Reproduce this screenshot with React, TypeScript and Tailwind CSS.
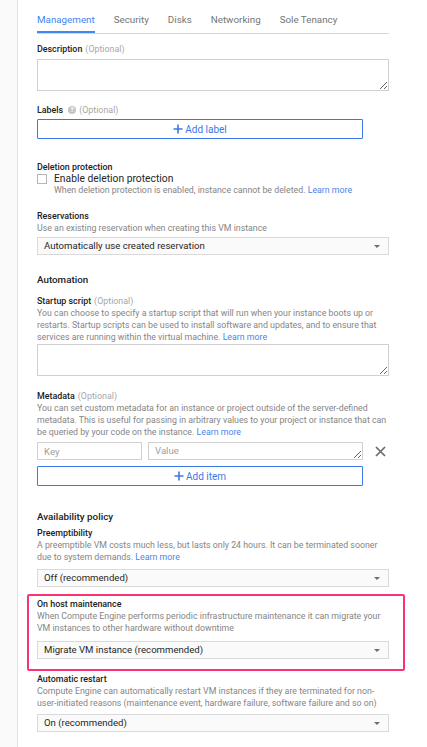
import { type ReactNode } from "react";

const tabs = ["Management", "Security", "Disks", "Networking", "Sole Tenancy"];

function Label({ children, optional, help, className = "" }: { children: ReactNode; optional?: boolean; help?: boolean; className?: string }) {
  return (
    <div className={`flex items-center text-[8.9px] leading-[12px] font-medium text-[#212121] ${className}`}>
      <span>{children}</span>
      {help && (
        <span className="ml-[5px] w-[8px] h-[8px] rounded-full bg-[#c4c4c4] text-white text-[6.5px] leading-[8px] font-bold flex items-center justify-center">
          ?
        </span>
      )}
      {optional && <span className="ml-[3px] font-normal text-[#a8a8a8]">(Optional)</span>}
    </div>
  );
}

function Help({ children, className = "" }: { children: ReactNode; className?: string }) {
  return <p className={`text-[8.8px] leading-[12px] text-[#858585] ${className}`}>{children}</p>;
}

function LearnMore() {
  return <span className="text-[#4a85ec]">Learn more</span>;
}

function Select({ value, className = "" }: { value: string; className?: string }) {
  return (
    <div className={`h-[18px] w-[352px] border border-[#dadada] bg-[#fafafa] flex items-center justify-between pl-[6px] pr-[8px] text-[9.6px] text-[#262626] ${className}`}>
      <span>{value}</span>
      <span className="w-0 h-0 border-l-[3px] border-r-[3px] border-t-[3px] border-l-transparent border-r-transparent border-t-[#6e6e6e]" />
    </div>
  );
}

function Plus() {
  return (
    <svg width="10" height="10" viewBox="0 0 10 10" className="mr-[2px]">
      <path d="M5 0.5v9M0.5 5h9" stroke="#3b78e7" strokeWidth="1.6" />
    </svg>
  );
}

function AddButton({ label, className = "" }: { label: string; className?: string }) {
  return (
    <button className={`h-[20px] w-[326px] border border-[#3b78e7] rounded-[1px] flex items-center justify-center text-[10px] text-[#3b78e7] ${className}`}>
      <Plus />
      {label}
    </button>
  );
}

function Area({ className = "" }: { className?: string }) {
  return <textarea className={`block w-[352px] h-[32px] border border-[#d0d0d0] resize-y outline-none ${className}`} />;
}

export default function App() {
  return (
    <div className="flex min-h-screen bg-white" style={{ fontFamily: "Roboto, 'Liberation Sans', sans-serif" }}>
      <div className="w-[18px] shrink-0 bg-[#fafafa] border-r border-[#e3e3e3]" />
      <div className="pl-[19px] flex flex-col">
        <div className="w-[352px] flex border-b border-[#d6d6d6]">
          {tabs.map((tab, i) => (
            <div
              key={tab}
              className={`h-[33px] pt-[13px] text-[9.8px] leading-[14px] mr-[19px] ${
                i === 0 ? "text-[#4285f4] border-b-2 border-[#4285f4]" : "text-[#757575]"
              }`}
            >
              {tab}
            </div>
          ))}
        </div>

        <Label optional className="mt-[9px]">Description</Label>
        <Area className="mt-[4px]" />

        <Label help optional className="mt-[13px]">Labels</Label>
        <AddButton label="Add label" className="mt-[3px]" />

        <Label className="mt-[22px]">Deletion protection</Label>
        <div className="flex items-center h-[12px]">
          <span className="w-[10px] h-[10px] border border-[#b5b5b5] bg-white" />
          <span className="ml-[7px] text-[10.3px] leading-[12px] text-[#262626]">Enable deletion protection</span>
        </div>
        <Help className="ml-[17px] mt-[-1px]">
          When deletion protection is enabled, instance cannot be deleted. <LearnMore />
        </Help>

        <Label className="mt-[14px]">Reservations</Label>
        <Help>Use an existing reservation when creating this VM instance</Help>
        <Select value="Automatically use created reservation" className="mt-[3px]" />

        <div className="mt-[18px] text-[9.8px] leading-[14px] font-medium text-[#212121]">Automation</div>

        <Label optional className="mt-[8px]">Startup script</Label>
        <Help className="w-[352px]">
          You can choose to specify a startup script that will run when your instance boots up or restarts. Startup scripts can be used to install software and updates, and to ensure that services are running within the virtual machine. <LearnMore />
        </Help>
        <Area className="mt-[1px]" />

        <Label optional className="mt-[14px]">Metadata</Label>
        <Help className="w-[352px]">
          You can set custom metadata for an instance or project outside of the server-defined metadata. This is useful for passing in arbitrary values to your project or instance that can be queried by your code on the instance. <LearnMore />
        </Help>
        <div className="mt-[4px] flex items-center h-[18px]">
          <input placeholder="Key" className="w-[105px] h-[18px] border border-[#d0d0d0] px-[6px] text-[9.6px] placeholder:text-[#9e9e9e] outline-none" />
          <textarea placeholder="Value" className="block ml-[6px] w-[215px] h-[18px] border border-[#d0d0d0] px-[6px] py-0 text-[9.6px] leading-[16px] placeholder:text-[#9e9e9e] resize-y outline-none" />
          <svg width="11" height="11" viewBox="0 0 11 11" className="ml-[12px]">
            <path d="M1 1l9 9M10 1l-9 9" stroke="#6b6b6b" strokeWidth="1.7" />
          </svg>
        </div>
        <AddButton label="Add item" className="mt-[6px]" />

        <div className="mt-[24px] text-[9.8px] leading-[14px] font-medium text-[#212121]">Availability policy</div>

        <Label className="mt-[3px]">Preemptibility</Label>
        <Help className="w-[352px]">
          A preemptible VM costs much less, but lasts only 24 hours. It can be terminated sooner due to system demands. <LearnMore />
        </Help>
        <Select value="Off (recommended)" className="mt-[6px]" />

        <div className="mt-[7px] ml-[-10px] w-[378px] border-2 border-[#fb3372] rounded-[2px] pl-[8px] pt-[2px] pb-[10px]">
          <Label>On host maintenance</Label>
          <Help className="w-[352px]">
            When Compute Engine performs periodic infrastructure maintenance it can migrate your VM instances to other hardware without downtime
          </Help>
          <Select value="Migrate VM instance (recommended)" className="mt-[7px]" />
        </div>

        <Label className="mt-[2px]">Automatic restart</Label>
        <Help className="w-[352px]">
          Compute Engine can automatically restart VM instances if they are terminated for non-user-initiated reasons (maintenance event, hardware failure, software failure and so on)
        </Help>
        <Select value="On (recommended)" className="mt-[5px]" />
        <div className="h-[20px]" />
      </div>
    </div>
  );
}
